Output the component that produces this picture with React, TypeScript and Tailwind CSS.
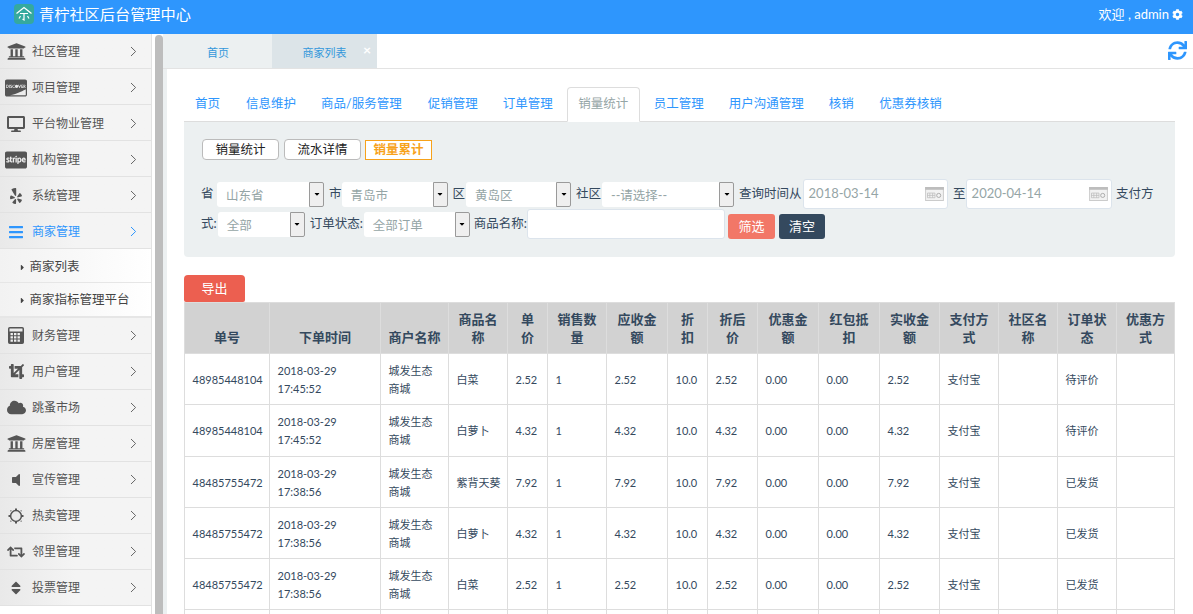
import React from "react";
import {
  FaUniversity, FaCcDiscover, FaDesktop, FaCcStripe, FaYelp, FaBars, FaCrop, FaCloud,
  FaVolumeOff, FaRetweet, FaSort, FaSync, FaCog, FaCaretRight, FaCaretDown,
} from "react-icons/fa";

const FONT = "[font-family:'Lato','Noto_Sans_CJK_SC',sans-serif]";

function Calc({ className }: { className?: string }) {
  return (
    <svg viewBox="0 0 16 17" width="16" height="17" className={className}>
      <rect x="0.75" y="0.75" width="14.5" height="15.5" rx="1" fill="none" stroke="currentColor" strokeWidth="1.5" />
      <path d="M1 4.5h14V16H1z" fill="currentColor" />
      <path d="M2.5 6h2.4v2.2H2.5zM6 6h2.4v2.2H6zM9.5 6h2.4v2.2H9.5zM2.5 9.3h2.4v2.2H2.5zM6 9.3h2.4v2.2H6zM9.5 9.3h2.4v2.2H9.5zM2.5 12.6h2.4v2.2H2.5zM6 12.6h2.4v2.2H6zM9.5 12.6h2.4v2.2H9.5z" fill="#f0f0f0" />
    </svg>
  );
}

function Sun({ className }: { className?: string }) {
  return (
    <svg viewBox="0 0 16 16" width="16" height="16" className={className}>
      <circle cx="8" cy="8" r="5.4" fill="none" stroke="currentColor" strokeWidth="1.5" />
      <path d="M7 0.5h2v2H7zM7 13.5h2v2H7zM0.5 7h2v2h-2zM13.5 7h2v2h-2zM2.2 2.2l1.6 0.4 -1.2 1.2zM13.8 2.2l-0.4 1.6 -1.2-1.2zM2.2 13.8l0.4-1.6 1.2 1.2zM13.8 13.8l-1.6-0.4 1.2-1.2z" fill="currentColor" />
    </svg>
  );
}

type Item = { label: string; Icon: React.ComponentType<{ className?: string }>; size: string; active?: boolean };

const top: Item[] = [
  { label: "社区管理", Icon: FaUniversity, size: "text-[19px]" },
  { label: "项目管理", Icon: FaCcDiscover, size: "text-[22px]" },
  { label: "平台物业管理", Icon: FaDesktop, size: "text-[18px]" },
  { label: "机构管理", Icon: FaCcStripe, size: "text-[22px]" },
  { label: "系统管理", Icon: FaYelp, size: "text-[16px]" },
  { label: "商家管理", Icon: FaBars, size: "text-[16px]", active: true },
];
const bottom: Item[] = [
  { label: "财务管理", Icon: Calc, size: "" },
  { label: "用户管理", Icon: FaCrop, size: "text-[15px]" },
  { label: "跳蚤市场", Icon: FaCloud, size: "text-[19px]" },
  { label: "房屋管理", Icon: FaUniversity, size: "text-[19px]" },
  { label: "宣传管理", Icon: FaVolumeOff, size: "text-[16px]" },
  { label: "热卖管理", Icon: Sun, size: "" },
  { label: "邻里管理", Icon: FaRetweet, size: "text-[18px]" },
  { label: "投票管理", Icon: FaSort, size: "text-[16px]" },
];

function MenuRow({ item, height }: { item: Item; height: string }) {
  const { Icon } = item;
  return (
    <div className={`flex ${height} items-center border-b border-[#e2e2e2] bg-gradient-to-r from-[#e9e9e9] via-[#f4f4f4] to-[#f4f4f4]`}>
      <span className="flex w-[32px] shrink-0 items-center justify-center">
        <Icon className={`${item.size} ${item.active ? "text-[#2e96fd]" : "text-[#555555]"}`} />
      </span>
      <span className={`flex-1 text-[12px] ${item.active ? "text-[#2e96fd]" : "text-[#555555]"}`}>{item.label}</span>
      <svg width="7" height="11" viewBox="0 0 7 11" className={`mr-[14px] ${item.active ? "text-[#2e96fd]" : "text-[#666666]"}`}>
        <path d="M1 1l4.6 4.5L1 10" fill="none" stroke="currentColor" strokeWidth="1" />
      </svg>
    </div>
  );
}

function Sub({ label, pad }: { label: string; pad: string }) {
  return (
    <div className={`flex h-[34px] items-center border-b border-[#e6e6e6] bg-gradient-to-r from-[#f2f2f2] to-white pl-[18px] ${pad} text-[12.5px] text-[#444444]`}>
      <FaCaretRight className="mr-[2.5px] text-[9px] text-[#444444]" />
      {label}
    </div>
  );
}

function Select({ text, w }: { text: string; w: string }) {
  return (
    <span className={`inline-flex h-[25px] shrink-0 ${w} items-stretch rounded-[3px] bg-white`}>
      <span className="flex flex-1 items-center pl-[9px] pt-[4px] text-[12.5px] text-[#95a5a6]">{text}</span>
      <span className="flex w-[15px] items-center justify-center rounded-r-[2px] border border-[#9a9a9a] bg-[#efefef]">
        <FaCaretDown className="text-[8px] text-black" />
      </span>
    </span>
  );
}

function DateBox({ text, w }: { text: string; w: string }) {
  return (
    <span className={`inline-flex h-[30px] ${w} shrink-0 items-center justify-between rounded-[3px] border border-[#dce4ec] bg-white pl-[5px] pr-[3px] text-[13px] text-[#95a5a6]`}>
      {text}
      <svg width="19" height="14" viewBox="0 0 20 15">
        <rect x="0.5" y="0.5" width="19" height="14" fill="#f2f2f2" stroke="#c8c8c8" />
        <rect x="0" y="0" width="20" height="3" fill="#bdbdbd" />
        <path d="M2.5 6.5h8v5h-8zM5 6.5v5M8 6.5v5M2.5 9h8" fill="none" stroke="#bcbcbc" strokeWidth="0.8" />
        <circle cx="14.5" cy="9" r="2.2" fill="none" stroke="#a8a8a8" />
      </svg>
    </span>
  );
}

const cols = [85, 111, 68, 59, 40, 59, 61, 40, 50, 61, 61, 60, 59, 59, 59, 58];
const heads = ["单号", "下单时间", "商户名称", "商品名称", "单价", "销售数量", "应收金额", "折扣", "折后价", "优惠金额", "红包抵扣", "实收金额", "支付方式", "社区名称", "订单状态", "优惠方式"];
const rows = [
  ["48985448104", "2018-03-29", "17:45:52", "白菜", "2.52", "待评价"],
  ["48985448104", "2018-03-29", "17:45:52", "白萝卜", "4.32", "待评价"],
  ["48485755472", "2018-03-29", "17:38:56", "紫背天葵", "7.92", "已发货"],
  ["48485755472", "2018-03-29", "17:38:56", "白萝卜", "4.32", "已发货"],
  ["48485755472", "2018-03-29", "17:38:56", "白菜", "2.52", "已发货"],
];
const navs: [string, string][] = [
  ["首页", "pl-[11px] pr-[12.5px]"],
  ["信息维护", "pl-[13.5px] pr-[12.5px]"],
  ["商品/服务管理", "px-[12.5px]"],
  ["促销管理", "pl-[13.5px] pr-[12.5px]"],
  ["订单管理", "px-[12.5px]"],
  ["销量统计", ""],
  ["员工管理", "pl-[14px] pr-[12.5px]"],
  ["用户沟通管理", "px-[12.5px]"],
  ["核销", "px-[12.5px]"],
  ["优惠券核销", "pl-[13px] pr-[12.5px]"],
];
const td = "border border-[#dddddd] pl-[7.5px] pr-[4px] pt-[2px] align-middle text-[11px] leading-[18px] text-[#34495e] whitespace-nowrap";

export default function App() {
  return (
    <div className={`flex h-screen flex-col overflow-hidden bg-white ${FONT}`}>
      <header className="flex h-[34px] shrink-0 items-center justify-between bg-[#2e96fd] pb-[5px] pl-[14px] pr-[10px] text-white">
        <div className="flex items-center">
          <svg width="20" height="20" viewBox="0 0 20 20" className="mr-[5px]">
            <rect width="20" height="20" rx="4" fill="#35a99e" />
            <path d="M2.5 9.5L10 3.5l7.5 6" fill="none" stroke="#fff" strokeWidth="1.3" />
            <path d="M6 9.5h8M10 9.5v6.5l-1.5-1M6.5 12l-1.5 2.5M13.5 12l1.5 2.5" fill="none" stroke="#fff" strokeWidth="1.2" />
          </svg>
          <span className="text-[15.2px]">青柠社区后台管理中心</span>
        </div>
        <div className="flex items-center text-[13px]">
          欢迎 , admin
          <FaCog className="ml-[3px] text-[11px]" />
        </div>
      </header>

      <div className="flex min-h-0 flex-1">
        <aside className="flex w-[163px] shrink-0 bg-white">
          <div className="w-[152px] shrink-0 border-r border-[#e2e2e2]">
            {top.map((i, n) => (
              <MenuRow key={i.label} item={i} height={n === 0 ? "h-[35px] pt-[1px]" : "h-[36px] pt-[2px]"} />
            ))}
            <Sub label="商家列表" pad="pt-[3px]" />
            <Sub label="商家指标管理平台" pad="pt-[2px]" />
            <div className="h-px bg-[#e6e6e6]" />
            {bottom.map((i) => <MenuRow key={i.label} item={i} height="h-[36px]" />)}
          </div>
          <div className="ml-[3px] mt-[1px] w-[8px] rounded-t-[4px] bg-[#bdbdbd]" />
        </aside>

        <main className="flex min-w-0 flex-1 flex-col">
          <div className="flex h-[35px] shrink-0 border-b border-[#e3e3e3] bg-white text-[11px] text-[#3498db]">
            <div className="w-[3px] bg-[#ecf0f1]" />
            <div className="flex w-[106px] items-center justify-center bg-[#ecf0f1] pr-[2px] pt-[4px]">首页</div>
            <div className="relative flex w-[105px] items-center justify-center bg-[#dce4e8] pt-[4px]">
              商家列表
              <span className="absolute right-[6px] top-[9px] text-[14px] font-bold leading-none text-white">×</span>
            </div>
            <div className="flex flex-1 items-center justify-end pb-[1px] pr-[6px]">
              <FaSync className="text-[19px] text-[#2e96fd]" />
            </div>
          </div>

          <div className="flex min-h-0 flex-1 bg-[#ecf0f1] pl-[4px]">
            <div className="flex-1 bg-white pl-[17px] pr-[18px] pt-[18px]">
              <nav className="flex h-[35px] items-stretch border-b border-[#dddddd] text-[12.5px] text-[#2e96fd]">
                {navs.map(([n, cls]) =>
                  n === "销量统计" ? (
                    <span key={n} className="relative mb-[-1px] ml-[1.5px] flex w-[73px] items-center justify-center rounded-t-[4px] border border-[#dddddd] border-b-white bg-white text-[#95a5a6]">{n}</span>
                  ) : (
                    <span key={n} className={`flex items-center ${cls}`}>{n}</span>
                  ),
                )}
              </nav>

              <section className="h-[135px] rounded-b-[4px] bg-[#ecf0f1] pl-[17px] pt-[17px]">
                <div className="flex items-center text-[12.5px]">
                  <span className="ml-[1px] flex h-[21px] w-[77px] items-center justify-center rounded-[4px] border border-[#bbbbbb] bg-white pt-[1px] text-[#222222]">销量统计</span>
                  <span className="ml-[5px] flex h-[21px] w-[77px] items-center justify-center rounded-[4px] border border-[#bbbbbb] bg-white pt-[1px] text-[#222222]">流水详情</span>
                  <span className="ml-[4px] flex h-[20px] w-[67px] items-center justify-center border border-[#f7a21b] bg-white pt-[1px] font-bold text-[#f7a21b]">销量累计</span>
                </div>

                <div className="mt-[19px] flex h-[30px] items-center whitespace-nowrap text-[12.5px] text-[#34495e]">
                  <span className="mr-[3.5px]">省</span>
                  <Select text="山东省" w="w-[107px]" />
                  <span className="ml-[5px]">市</span>
                  <Select text="青岛市" w="w-[106px]" />
                  <span className="ml-[5px] mr-[1px]">区</span>
                  <Select text="黄岛区" w="w-[105px]" />
                  <span className="ml-[5px] mr-[1px]">社区</span>
                  <Select text="--请选择--" w="w-[132px]" />
                  <span className="ml-[5px] mr-[1px]">查询时间从</span>
                  <DateBox text="2018-03-14" w="w-[145.5px]" />
                  <span className="ml-[5px]">至</span>
                  <DateBox text="2020-04-14" w="w-[146.5px]" />
                  <span className="ml-[4px]">支付方</span>
                </div>
                <div className="flex h-[30px] items-center whitespace-nowrap text-[12.5px] text-[#34495e]">
                  <span className="mr-[1px]">式:</span>
                  <Select text="全部" w="w-[87px]" />
                  <span className="ml-[5px] mr-[1px]">订单状态:</span>
                  <Select text="全部订单" w="w-[106px]" />
                  <span className="ml-[4px]">商品名称:</span>
                  <span className="h-[30px] w-[198px] rounded-[3px] border border-[#dce4ec] bg-white" />
                  <span className="ml-[3px] mt-[5px] flex h-[25px] w-[47px] items-center justify-center rounded-[3px] bg-[#f27767] text-[13px] text-white">筛选</span>
                  <span className="ml-[4px] mt-[5px] flex h-[25px] w-[46px] items-center justify-center rounded-[3px] bg-[#34495e] text-[13px] text-white">清空</span>
                </div>
              </section>

              <button className="mt-[18px] block h-[27px] w-[61px] rounded-t-[4px] rounded-b-[2px] bg-[#ec5f50] text-[13px] text-white">导出</button>

              <table className="w-[991px] table-fixed border-collapse">
                <colgroup>
                  {cols.map((w, i) => <col key={i} style={{ width: w }} />)}
                </colgroup>
                <thead>
                  <tr className="h-[51px]">
                    {heads.map((h) => (
                      <th key={h} className="border border-[#dddddd] bg-[#d2d2d2] px-[7px] pb-[7px] align-bottom text-[13px] font-bold leading-[18px] text-[#34495e]">{h}</th>
                    ))}
                  </tr>
                </thead>
                <tbody>
                  {rows.map((r, i) => (
                    <tr key={i} className="h-[51.25px]">
                      <td className={td}>{r[0]}</td>
                      <td className={td}>{r[1]}<br />{r[2]}</td>
                      <td className={td}>城发生态<br />商城</td>
                      <td className={td}>{r[3]}</td>
                      <td className={td}>{r[4]}</td>
                      <td className={td}>1</td>
                      <td className={td}>{r[4]}</td>
                      <td className={td}>10.0</td>
                      <td className={td}>{r[4]}</td>
                      <td className={td}>0.00</td>
                      <td className={td}>0.00</td>
                      <td className={td}>{r[4]}</td>
                      <td className={td}>支付宝</td>
                      <td className={td}></td>
                      <td className={td}>{r[5]}</td>
                      <td className={td}></td>
                    </tr>
                  ))}
                  <tr className="h-[51px]">
                    {cols.map((_, i) => <td key={i} className={td}></td>)}
                  </tr>
                </tbody>
              </table>
            </div>
          </div>
        </main>
      </div>
    </div>
  );
}
